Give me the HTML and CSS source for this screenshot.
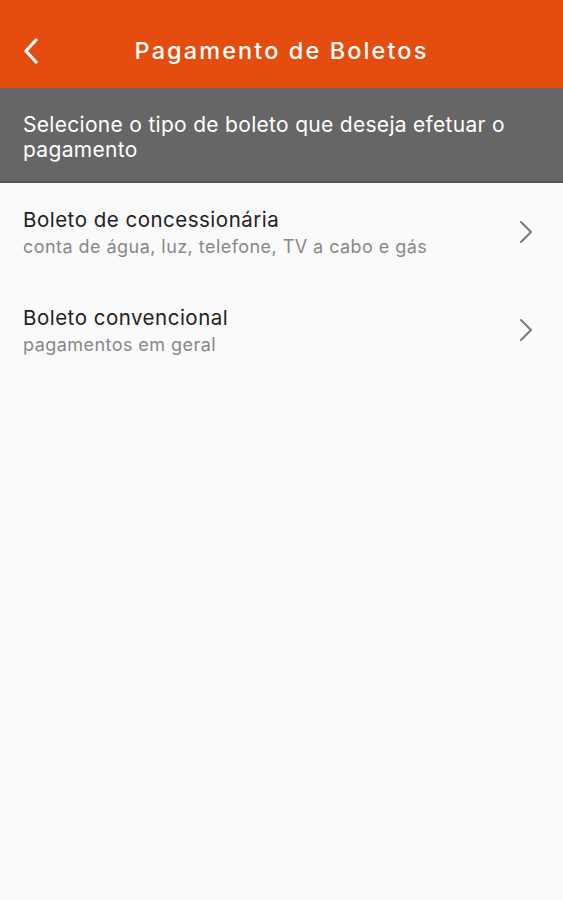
FILE: index.html
```html
<!DOCTYPE html>
<html lang="pt-br">

<head>
    <meta charset="UTF-8">
    <meta name="viewport" content="width=device-width, initial-scale=1.0">
    <title>Pagamento de Boletos</title>
    <link rel="stylesheet" href="styles.css">
</head>

<body>
    <header class="topo">
        <button class="voltar" aria-label="Voltar">
            <svg width="16" height="26" viewBox="0 0 16 26">
                <path d="M13 2 L3 13 L13 24" fill="none" stroke="#fff" stroke-width="3.2" stroke-linecap="round" stroke-linejoin="round"/>
            </svg>
        </button>
        <h1>Pagamento de Boletos</h1>
    </header>

    <div class="instrucao">
        <p>Selecione o tipo de boleto que deseja efetuar o pagamento</p>
    </div>

    <main class="lista">
        <a class="item" href="#">
            <div class="textos">
                <span class="titulo">Boleto de concessionária</span>
                <span class="descricao">conta de água, luz, telefone, TV a cabo e gás</span>
            </div>
            <svg class="seta" width="14" height="24" viewBox="0 0 14 24">
                <path d="M2 2 L12 12 L2 22" fill="none" stroke="#7a7a7a" stroke-width="2" stroke-linecap="round" stroke-linejoin="round"/>
            </svg>
        </a>
        <a class="item" href="#">
            <div class="textos">
                <span class="titulo">Boleto convencional</span>
                <span class="descricao">pagamentos em geral</span>
            </div>
            <svg class="seta" width="14" height="24" viewBox="0 0 14 24">
                <path d="M2 2 L12 12 L2 22" fill="none" stroke="#7a7a7a" stroke-width="2" stroke-linecap="round" stroke-linejoin="round"/>
            </svg>
        </a>
    </main>
</body>

</html>
```

FILE: styles.css
```css
* {
    box-sizing: border-box;
}

body {
    margin: 0;
    background: #fafafa;
    font-family: Inter, "Noto Sans", sans-serif;
    min-height: 900px;
}

.topo {
    position: relative;
    height: 88px;
    background: #e54d0e;
    display: flex;
    align-items: center;
    justify-content: center;
    padding-top: 12px;
}

.topo h1 {
    margin: 0;
    color: #fff;
    font-size: 23.5px;
    font-weight: 500;
    letter-spacing: 2.1px;
}

.voltar {
    position: absolute;
    left: 23px;
    top: 38px;
    background: none;
    border: none;
    padding: 0;
    line-height: 0;
}

.instrucao {
    background: #666;
    border-bottom: 2px solid #555;
    height: 95px;
    padding: 24px 23px 0;
}

.instrucao p {
    margin: 0;
    color: #fff;
    font-size: 21px;
    letter-spacing: 0.3px;
    line-height: 25px;
}

.lista {
    display: flex;
    flex-direction: column;
}

.item {
    display: flex;
    align-items: center;
    justify-content: space-between;
    height: 98px;
    padding: 0 30px 0 23px;
    text-decoration: none;
}

.textos {
    display: flex;
    flex-direction: column;
    gap: 4px;
}

.titulo {
    color: #222;
    font-size: 20.5px;
    letter-spacing: 0.5px;
}

.descricao {
    color: #888;
    font-size: 18px;
    letter-spacing: 0.45px;
}
```
